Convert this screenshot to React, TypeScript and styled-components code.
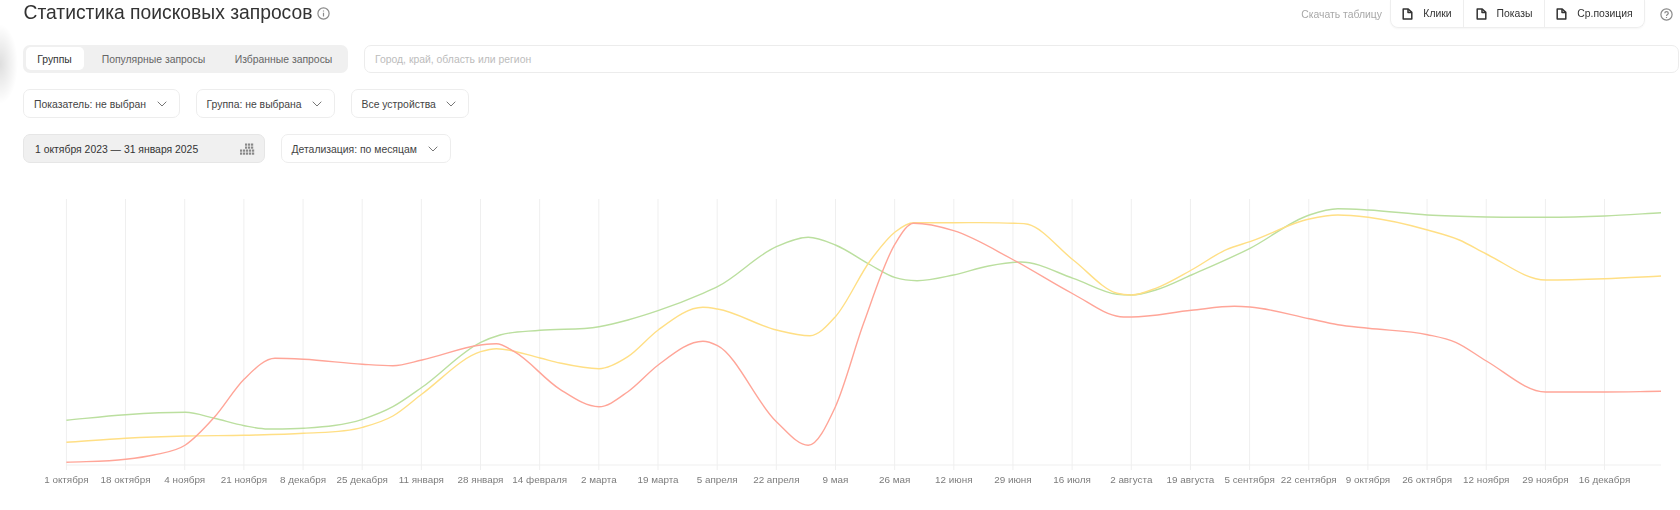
import { createGlobalStyle, styled } from "styled-components";

const GlobalStyle = createGlobalStyle`
	html, body {
		margin: 0;
		padding: 0;
		background: #fff;
	}
	* {
		box-sizing: border-box;
	}
	body {
		font-family: "Liberation Sans", Arial, sans-serif;
		color: #333;
		overflow: hidden;
	}
`;

const Page = styled.div`
	position: relative;
	width: 1680px;
	height: 510px;
	overflow: hidden;
	filter: blur(0.55px);
`;

const EdgeShadow = styled.div`
	position: absolute;
	left: 0;
	top: 24px;
	width: 18px;
	height: 80px;
	background: radial-gradient(ellipse at 0 50%, rgba(0, 0, 0, 0.13), rgba(0, 0, 0, 0) 70%);
`;

const Controls = styled.div`
	display: flex;
	flex-direction: column;
	padding-left: 23px;
	padding-right: 1px;
`;

const Header = styled.header`
	display: flex;
	align-items: center;
	justify-content: space-between;
	height: 28px;
	padding-right: 6px;
`;

const TitleWrap = styled.div`
	display: flex;
	align-items: center;
	gap: 5px;
	padding-left: 0.5px;
	padding-bottom: 2px;
`;

const Title = styled.h1`
	margin: 0;
	font-size: 19.3px;
	line-height: 26px;
	font-weight: 400;
	color: #333;
`;

const HintIcon = styled.svg`
	display: block;
	width: 13px;
	height: 13px;
	fill: none;
	stroke: #8a8a8a;
	stroke-width: 1.2;
`;

const Downloads = styled.div`
	display: flex;
	align-items: center;
	height: 28px;
`;

const DownloadLabel = styled.span`
	font-size: 10.4px;
	color: #a8a8a8;
	margin-right: 8px;
`;

const DownloadGroup = styled.div`
	display: flex;
	height: 28px;
	margin-right: 15px;
	border: 1px solid #eee;
	border-top: none;
	border-radius: 0 0 8px 8px;
	box-shadow: 0 1px 2px rgba(0, 0, 0, 0.04);
`;

const DownloadButton = styled.button<{ $width: number }>`
	display: flex;
	align-items: center;
	justify-content: center;
	gap: 10px;
	width: ${props => props.$width}px;
	padding: 0;
	border: none;
	border-left: 1px solid #eee;
	background: none;
	font: inherit;
	font-size: 10.4px;
	color: #333;
	&:first-child {
		border-left: none;
	}
`;

const FileIcon = styled.svg`
	display: block;
	width: 11px;
	height: 12px;
	fill: none;
	stroke: #333;
	stroke-width: 1.5;
	stroke-linejoin: round;
`;

const Row = styled.div<{ $top: number }>`
	display: flex;
	margin-top: ${props => props.$top}px;
`;

const Tabs = styled.div`
	display: flex;
	align-items: center;
	flex: none;
	width: 325px;
	height: 28px;
	padding: 2.5px;
	border-radius: 7px;
	background: #f0f0f0;
`;

const Tab = styled.button<{ $active?: boolean; $width: number }>`
	width: ${props => props.$width}px;
	height: 23px;
	padding: 1px 0 0;
	border: none;
	border-radius: 5px;
	background: ${props => (props.$active ? "#fff" : "transparent")};
	font: inherit;
	font-size: 10.4px;
	color: ${props => (props.$active ? "#333" : "#666")};
`;

const RegionInput = styled.input`
	flex: 1;
	height: 28px;
	margin-left: 16px;
	padding: 1px 10px 0;
	border: 1px solid #ececec;
	border-radius: 7px;
	outline: none;
	font: inherit;
	font-size: 10.4px;
	&::placeholder {
		color: #bcbcbc;
		opacity: 1;
	}
`;

const Select = styled.button<{ $width: number }>`
	display: flex;
	align-items: center;
	justify-content: space-between;
	flex: none;
	width: ${props => props.$width}px;
	height: 29px;
	margin-right: 16px;
	padding: 1px 12px 0 10px;
	border: 1px solid #ededed;
	border-radius: 7px;
	background: #fff;
	font: inherit;
	font-size: 10.4px;
	color: #444;
`;

const Chevron = styled.svg`
	display: block;
	width: 10px;
	height: 6px;
	fill: none;
	stroke: #777;
	stroke-width: 1;
`;

const DateField = styled.div`
	display: flex;
	align-items: center;
	justify-content: space-between;
	flex: none;
	width: 241.5px;
	height: 29px;
	margin-right: 16px;
	padding: 1px 9px 0 11px;
	border: 1px solid #e6e6e6;
	border-radius: 7px;
	background: #f0f0f0;
	font-size: 10.4px;
	color: #333;
`;

const CalendarIcon = styled.svg`
	display: block;
	width: 15px;
	height: 13px;
	fill: #888;
`;

const ChartSvg = styled.svg`
	display: block;
	margin-top: 27px;
`;

const GridLine = styled.line`
	stroke: #efefef;
	stroke-width: 1;
`;

const TickLabel = styled.text`
	font-family: "Liberation Sans", Arial, sans-serif;
	font-size: 9.9px;
	fill: #7c7c7c;
	text-anchor: middle;
`;

const Curve = styled.path<{ $color: string }>`
	fill: none;
	stroke: ${props => props.$color};
	stroke-width: 1.4;
`;

type Point = [number, number];

const ticks = [
	"1 октября", "18 октября", "4 ноября", "21 ноября", "8 декабря", "25 декабря", "11 января",
	"28 января", "14 февраля", "2 марта", "19 марта", "5 апреля", "22 апреля", "9 мая", "26 мая",
	"12 июня", "29 июня", "16 июля", "2 августа", "19 августа", "5 сентября", "22 сентября",
	"9 октября", "26 октября", "12 ноября", "29 ноября", "16 декабря",
];

const green: Point[] = [
	[66.4, 420.3], [125.7, 414.7], [185.4, 412.3], [214.3, 418.3], [244.3, 425.7], [267.9, 429],
	[303.6, 428.3], [362.5, 419.3], [392.9, 406.7], [422, 387.3], [480.7, 342.3], [500, 335],
	[540, 330.3], [599, 326.7], [627.9, 320], [658, 310.7], [702.9, 293.3], [717.5, 286.7],
	[776.4, 246.7], [808.2, 237.3], [835.4, 245], [870.7, 265], [895.4, 277.7], [917.1, 280.7],
	[953.6, 275], [988.6, 266], [1020.7, 262], [1073.2, 278.3], [1117, 294.3], [1131.4, 295],
	[1155.7, 290], [1191.4, 275], [1250, 248.3], [1309.3, 215], [1337.9, 208.7], [1368.2, 210],
	[1427.5, 215], [1486.4, 217], [1545.7, 217.3], [1604.6, 216], [1661, 212.7],
];

const yellow: Point[] = [
	[66.4, 442.3], [125.7, 438.3], [185.4, 436], [244.3, 435.3], [303.6, 433.3], [362.5, 427.3],
	[392.9, 416], [422, 394], [480.7, 351.7], [496.4, 348.7], [540, 358], [560, 363],
	[599, 368.7], [627.9, 356.7], [658.2, 330], [702.9, 307.3], [717.5, 309], [776.4, 330],
	[810, 335.7], [835.4, 316.7], [870.7, 260], [895.4, 231.7], [913.6, 222.7], [953.6, 222.7],
	[1013.6, 223.3], [1027.9, 224.3], [1073.2, 260], [1117, 293.3], [1131.4, 295], [1155.7, 288.3],
	[1191.4, 270], [1227, 249.3], [1250, 241.7], [1309.3, 219], [1337.9, 215], [1368.2, 217.3],
	[1427.5, 230], [1459.3, 240], [1486.4, 254], [1545.7, 280], [1604.6, 278.7], [1661, 276],
];

const red: Point[] = [
	[66.4, 462.3], [125.7, 459.3], [153.6, 455], [185.4, 445], [214.3, 417.3], [244.3, 379],
	[275, 358.3], [303.6, 359.3], [362.5, 364.3], [392.9, 365.7], [422, 360], [480.7, 345],
	[496.4, 343.7], [514.3, 351.7], [560, 389.3], [599, 406.7], [627.9, 391.7], [658.2, 365],
	[702.9, 341.3], [717.5, 345.7], [776.4, 421.7], [808.2, 445.3], [835.4, 406.7], [863.6, 323.3],
	[895.4, 243.3], [913.6, 223.3], [953.6, 230.7], [1013.6, 260], [1073.2, 294], [1120, 316.7],
	[1131.4, 317], [1191.4, 310.3], [1234.3, 306.3], [1250, 307], [1309.3, 318.7], [1337.9, 324.7],
	[1368.2, 328.3], [1427.5, 334.7], [1455.7, 342.3], [1486.4, 361], [1545.7, 392], [1604.6, 392],
	[1661, 391.3],
];

// slope at each point, flat at peaks and dips so the curve doesn't overshoot
const slopes = (points: Point[]) =>
	points.map((p, i) => {
		const prev = points[i - 1];
		const next = points[i + 1];
		if (!prev) return (next[1] - p[1]) / (next[0] - p[0]);
		if (!next) return (p[1] - prev[1]) / (p[0] - prev[0]);
		const h0 = p[0] - prev[0];
		const h1 = next[0] - p[0];
		const d0 = (p[1] - prev[1]) / h0;
		const d1 = (next[1] - p[1]) / h1;
		if (d0 * d1 <= 0) return 0;
		return (d0 * h1 + d1 * h0) / (h0 + h1);
	});

const smooth = (points: Point[]) => {
	const m = slopes(points);
	let d = `M${points[0][0]} ${points[0][1]}`;
	for (let i = 0; i < points.length - 1; i++) {
		const [x1, y1] = points[i];
		const [x2, y2] = points[i + 1];
		const h = (x2 - x1) / 3;
		d += ` C${(x1 + h).toFixed(1)} ${(y1 + m[i] * h).toFixed(1)} ${(x2 - h).toFixed(1)} ${(y2 - m[i + 1] * h).toFixed(1)} ${x2} ${y2}`;
	}
	return d;
};

const FileGlyph = () => (
	<FileIcon viewBox="0 0 11 12">
		<path d="M1.2 1h5l3.6 3.4v6.6H1.2z" />
		<path d="M6 1v3.6h3.8" />
	</FileIcon>
);

const ChevronGlyph = () => (
	<Chevron viewBox="0 0 10 6">
		<path d="M0.7 0.7L5 5l4.3-4.3" />
	</Chevron>
);

const calendarDots: Point[] = [
	[5, 0], [8, 0], [11, 0],
	[5, 3], [8, 3], [11, 3],
	[0, 6], [3, 6], [6, 6], [9, 6], [12, 6],
	[0, 9], [3, 9], [6, 9], [9, 9], [12, 9],
];

function App() {
	return (
		<Page>
			<GlobalStyle />
			<EdgeShadow />
			<Controls>
				<Header>
					<TitleWrap>
						<Title>Статистика поисковых запросов</Title>
						<HintIcon viewBox="0 0 13 13">
							<circle cx="6.5" cy="6.5" r="5.6" />
							<path d="M6.5 5.8v3.6M6.5 3.4v1.2" />
						</HintIcon>
					</TitleWrap>
					<Downloads>
						<DownloadLabel>Скачать таблицу</DownloadLabel>
						<DownloadGroup>
							<DownloadButton $width={72}><FileGlyph />Клики</DownloadButton>
							<DownloadButton $width={81}><FileGlyph />Показы</DownloadButton>
							<DownloadButton $width={100}><FileGlyph />Ср.позиция</DownloadButton>
						</DownloadGroup>
						<HintIcon viewBox="0 0 13 13">
							<circle cx="6.5" cy="6.5" r="5.6" />
							<path d="M4.8 5.2c0-2.2 3.5-2.2 3.5 0 0 1.3-1.8 1.3-1.8 2.7M6.5 9v1" />
						</HintIcon>
					</Downloads>
				</Header>
				<Row $top={16.5}>
					<Tabs>
						<Tab $active $width={58}>Группы</Tab>
						<Tab $width={140}>Популярные запросы</Tab>
						<Tab $width={120}>Избранные запросы</Tab>
					</Tabs>
					<RegionInput placeholder="Город, край, область или регион" />
				</Row>
				<Row $top={16.5}>
					<Select $width={156.5}>Показатель: не выбран<ChevronGlyph /></Select>
					<Select $width={139}>Группа: не выбрана<ChevronGlyph /></Select>
					<Select $width={118}>Все устройства<ChevronGlyph /></Select>
				</Row>
				<Row $top={16}>
					<DateField>
						1 октября 2023 — 31 января 2025
						<CalendarIcon viewBox="0 0 15 12">
							{calendarDots.map(([x, y]) => (
								<rect key={`${x}-${y}`} x={x} y={y} width="2.2" height="2.2" />
							))}
						</CalendarIcon>
					</DateField>
					<Select $width={170}>Детализация: по месяцам<ChevronGlyph /></Select>
				</Row>
			</Controls>
			<ChartSvg width="1680" height="320" viewBox="0 190 1680 320">
				{ticks.map((label, i) => {
					const x = 66.4 + i * 59.16;
					return <GridLine key={label} x1={x} x2={x} y1={199} y2={470} />;
				})}
				<GridLine x1={66} x2={1661} y1={465} y2={465} />
				<Curve $color="#bbdf9f" d={smooth(green)} />
				<Curve $color="#ffdf85" d={smooth(yellow)} />
				<Curve $color="#ffa598" d={smooth(red)} />
				{ticks.map((label, i) => (
					<TickLabel key={label} x={66.4 + i * 59.16} y={483}>{label}</TickLabel>
				))}
			</ChartSvg>
		</Page>
	);
}

export default App;
